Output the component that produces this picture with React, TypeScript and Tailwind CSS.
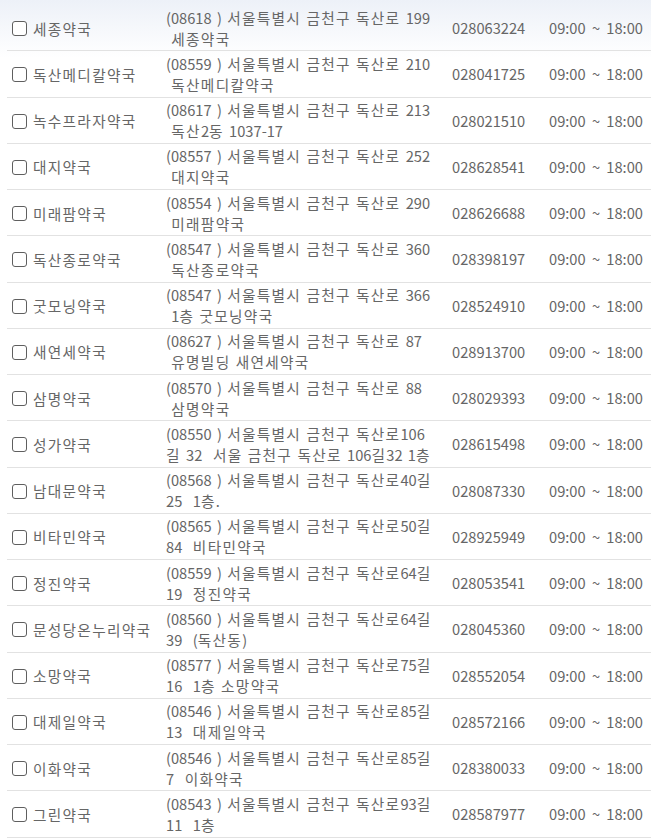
const pharmacies = [
  { name: "세종약국", line1: "(08618 ) 서울특별시 금천구 독산로 199", line2: " 세종약국", tel: "028063224" },
  { name: "독산메디칼약국", line1: "(08559 ) 서울특별시 금천구 독산로 210", line2: " 독산메디칼약국", tel: "028041725" },
  { name: "녹수프라자약국", line1: "(08617 ) 서울특별시 금천구 독산로 213", line2: " 독산2동 1037-17", tel: "028021510" },
  { name: "대지약국", line1: "(08557 ) 서울특별시 금천구 독산로 252", line2: " 대지약국", tel: "028628541" },
  { name: "미래팜약국", line1: "(08554 ) 서울특별시 금천구 독산로 290", line2: " 미래팜약국", tel: "028626688" },
  { name: "독산종로약국", line1: "(08547 ) 서울특별시 금천구 독산로 360", line2: " 독산종로약국", tel: "028398197" },
  { name: "굿모닝약국", line1: "(08547 ) 서울특별시 금천구 독산로 366", line2: " 1층 굿모닝약국", tel: "028524910" },
  { name: "새연세약국", line1: "(08627 ) 서울특별시 금천구 독산로 87", line2: " 유명빌딩 새연세약국", tel: "028913700" },
  { name: "삼명약국", line1: "(08570 ) 서울특별시 금천구 독산로 88", line2: " 삼명약국", tel: "028029393" },
  { name: "성가약국", line1: "(08550 ) 서울특별시 금천구 독산로106", line2: "길 32  서울 금천구 독산로 106길32 1층", tel: "028615498" },
  { name: "남대문약국", line1: "(08568 ) 서울특별시 금천구 독산로40길", line2: "25  1층.", tel: "028087330" },
  { name: "비타민약국", line1: "(08565 ) 서울특별시 금천구 독산로50길", line2: "84  비타민약국", tel: "028925949" },
  { name: "정진약국", line1: "(08559 ) 서울특별시 금천구 독산로64길", line2: "19  정진약국", tel: "028053541" },
  { name: "문성당온누리약국", line1: "(08560 ) 서울특별시 금천구 독산로64길", line2: "39  (독산동)", tel: "028045360" },
  { name: "소망약국", line1: "(08577 ) 서울특별시 금천구 독산로75길", line2: "16  1층 소망약국", tel: "028552054" },
  { name: "대제일약국", line1: "(08546 ) 서울특별시 금천구 독산로85길", line2: "13  대제일약국", tel: "028572166" },
  { name: "이화약국", line1: "(08546 ) 서울특별시 금천구 독산로85길", line2: "7  이화약국", tel: "028380033" },
  { name: "그린약국", line1: "(08543 ) 서울특별시 금천구 독산로93길", line2: "11  1층", tel: "028587977" },
];

// hangul runs get a bit of tracking so they sit on a full em like the original font
function Ko({ text }: { text: string }) {
  return (
    <>
      {text.split(/([가-힣]+)/).map((part, i) =>
        /[가-힣]/.test(part) ? (
          <span key={i} className="tracking-[1.3px]">{part}</span>
        ) : (
          <span key={i}>{part}</span>
        )
      )}
    </>
  );
}

export default function App() {
  return (
    <div className="min-h-screen bg-white bg-[linear-gradient(to_bottom,#edf1f8,#ffffff_58px)] bg-no-repeat pt-[5px] font-['Noto_Sans_CJK_KR','Noto_Sans',sans-serif] text-[14.67px] text-[#666] [word-spacing:2px]">
      <div className="ml-[7px]">
        {pharmacies.map((p) => (
          <div key={p.name} className="flex h-[46.25px] items-center border-b border-[#e2e2e2]">
            <label className="flex w-[153px] items-center gap-[6px] pl-[5px] pt-[2px]">
              <span className="h-[15px] w-[15px] shrink-0 rounded-[3px] border border-[#5f5f5f] bg-white" />
              <span className="whitespace-nowrap"><Ko text={p.name} /></span>
            </label>
            <div className="w-[286px] whitespace-pre pl-[6px] leading-[21px]">
              <div><Ko text={p.line1} /></div>
              <div><Ko text={p.line2} /></div>
            </div>
            <div className="w-[97px] pl-[6px] pt-[1px]">{p.tel}</div>
            <div className="flex-1 whitespace-nowrap pl-[6px] pt-[1px] [word-spacing:3px]">09:00 ~ 18:00</div>
          </div>
        ))}
      </div>
    </div>
  );
}
